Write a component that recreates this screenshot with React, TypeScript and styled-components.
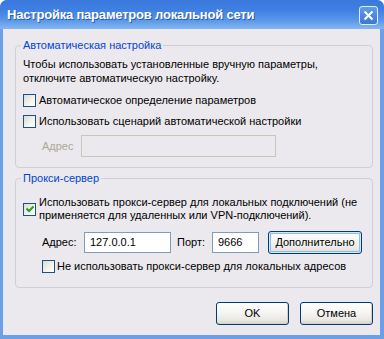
import styled, { createGlobalStyle } from 'styled-components'

const GlobalStyle = createGlobalStyle`
  html, body {
    margin: 0;
    padding: 0;
    background: #fff;
  }
  * {
    box-sizing: border-box;
  }
`

const Window = styled.div`
  width: 384px;
  height: 339px;
  display: flex;
  flex-direction: column;
  background: #6d9fe9;
  border-radius: 7px 7px 0 0;
  font-family: "Liberation Sans", Arial, sans-serif;
  font-size: 11px;
  line-height: 13px;
  color: #000;
  overflow: hidden;
`

const TitleBar = styled.div`
  height: 29px;
  flex: none;
  display: flex;
  align-items: center;
  justify-content: space-between;
  padding: 0 6px 0 7px;
  background: linear-gradient(180deg, #3a78dc 0%, #3f80e2 35%, #5a97ea 70%, #86b6f1 100%);
`

const Title = styled.span`
  color: #fff;
  font-weight: bold;
  font-size: 13px;
  text-shadow: 1px 1px 0 #2a5aaf;
  letter-spacing: -0.2px;
`

const CloseButton = styled.div`
  width: 19px;
  height: 19px;
  margin-top: 2px;
  border: 1px solid #e6eefc;
  border-radius: 3px;
  background: linear-gradient(180deg, #5f9bec 0%, #3c78da 100%);
  display: flex;
  align-items: center;
  justify-content: center;
`

const Body = styled.div`
  flex: 1;
  margin: 0 4px 4px 3px;
  background: #ebe9ed;
  display: flex;
  flex-direction: column;
  padding: 10px 7px 10px 12px;
`

const GroupBox = styled.fieldset<{ $gap?: number; $bottom: number }>`
  margin: ${(p) => p.$gap ?? 0}px 0 0 0;
  padding: 0 7px ${(p) => p.$bottom}px 7px;
  border: 1px solid #d0cfd4;
  border-radius: 4px;
  min-width: 0;
  display: flex;
  flex-direction: column;
`

const Legend = styled.legend`
  padding: 0 2px;
  margin-left: -2px;
  color: #0046d5;
  line-height: 13px;
`

const Description = styled.div`
  margin-top: 5px;
  line-height: 14px;
`

const Row = styled.div<{ $top: number; $indent?: number }>`
  display: flex;
  align-items: center;
  margin-top: ${(p) => p.$top}px;
  margin-left: ${(p) => p.$indent ?? 0}px;
`

const CheckLabel = styled.span<{ $gap?: number }>`
  margin-left: ${(p) => p.$gap ?? 3}px;
`

const Box = styled.span`
  width: 13px;
  height: 13px;
  flex: none;
  border: 1px solid #1c5180;
  background: linear-gradient(135deg, #dcdcd5 0%, #f4f4f0 60%, #ffffff 100%);
  display: flex;
  align-items: center;
  justify-content: center;
`

const FieldLabel = styled.span<{ $width: number; $disabled?: boolean }>`
  width: ${(p) => p.$width}px;
  flex: none;
  color: ${(p) => (p.$disabled ? '#aca899' : '#000')};
`

const TextBox = styled.div<{ $width: number; $height?: number; $disabled?: boolean }>`
  width: ${(p) => p.$width}px;
  height: ${(p) => p.$height ?? 21}px;
  flex: none;
  border: 1px solid ${(p) => (p.$disabled ? '#c9c7ba' : '#7f9db9')};
  background: ${(p) => (p.$disabled ? '#ebe9ed' : '#fff')};
  padding-left: 5px;
  display: flex;
  align-items: center;
`

const Button = styled.div<{ $width: number; $focused?: boolean }>`
  width: ${(p) => p.$width}px;
  height: 23px;
  flex: none;
  border: 1px solid #003c74;
  border-radius: 3px;
  background: linear-gradient(180deg, #ffffff 0%, #f5f5f2 45%, #eae8e3 80%, #d8d5cd 100%);
  box-shadow: ${(p) =>
    p.$focused
      ? 'inset 0 0 0 1px #cee7ff, inset 0 0 0 2px #98b8ea'
      : 'inset -1px -1px 0 #d6d0c5'};
  display: flex;
  align-items: center;
  justify-content: center;
`

const ButtonRow = styled.div`
  display: flex;
  justify-content: flex-end;
  gap: 11px;
  margin-top: 14px;
`

function Checkbox({ checked }: { checked?: boolean }) {
  return (
    <Box>
      {checked && (
        <svg width="8" height="8" viewBox="0 0 8 8">
          <path d="M0.5 3.5 L3 6 L7.5 1.5" stroke="#21a121" strokeWidth="2" fill="none" />
        </svg>
      )}
    </Box>
  )
}

export default function App() {
  return (
    <>
      <GlobalStyle />
      <Window>
        <TitleBar>
          <Title>Настройка параметров локальной сети</Title>
          <CloseButton>
            <svg width="11" height="11" viewBox="0 0 11 11">
              <path d="M1.5 1.5 L9.5 9.5 M9.5 1.5 L1.5 9.5" stroke="#fff" strokeWidth="2" />
            </svg>
          </CloseButton>
        </TitleBar>
        <Body>
          <GroupBox $bottom={10}>
            <Legend>Автоматическая настройка</Legend>
            <Description>
              Чтобы использовать установленные вручную параметры,
              <br />
              отключите автоматическую настройку.
            </Description>
            <Row $top={9}>
              <Checkbox />
              <CheckLabel>Автоматическое определение параметров</CheckLabel>
            </Row>
            <Row $top={8}>
              <Checkbox />
              <CheckLabel>Использовать сценарий автоматической настройки</CheckLabel>
            </Row>
            <Row $top={7} $indent={19}>
              <FieldLabel $width={39} $disabled>Адрес</FieldLabel>
              <TextBox $width={195} $height={22} $disabled />
            </Row>
          </GroupBox>

          <GroupBox $gap={4} $bottom={14}>
            <Legend>Прокси-сервер</Legend>
            <Row $top={11}>
              <Checkbox checked />
              <CheckLabel>
                Использовать прокси-сервер для локальных подключений (не
                <br />
                применяется для удаленных или VPN-подключений).
              </CheckLabel>
            </Row>
            <Row $top={9} $indent={19}>
              <FieldLabel $width={42}>Адрес:</FieldLabel>
              <TextBox $width={87}>127.0.0.1</TextBox>
              <FieldLabel $width={35} style={{ marginLeft: 6 }}>Порт:</FieldLabel>
              <TextBox $width={47}>9666</TextBox>
              <Button $width={94} $focused style={{ marginLeft: 9 }}>
                Дополнительно
              </Button>
            </Row>
            <Row $top={6} $indent={19}>
              <Checkbox />
              <CheckLabel $gap={2}>Не использовать прокси-сервер для локальных адресов</CheckLabel>
            </Row>
          </GroupBox>

          <ButtonRow>
            <Button $width={73}>OK</Button>
            <Button $width={73}>Отмена</Button>
          </ButtonRow>
        </Body>
      </Window>
    </>
  )
}
